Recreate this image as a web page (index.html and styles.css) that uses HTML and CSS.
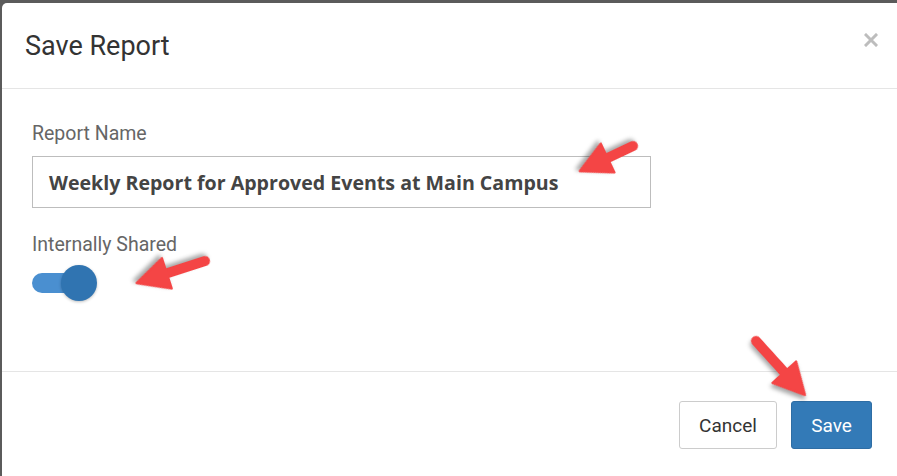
FILE: index.html
```html
<!DOCTYPE html>
<html>
<head>
<meta charset="utf-8">
<link rel="stylesheet" href="styles.css">
</head>
<body>
<div class="modal">
  <div class="modal-header">
    <h2 class="title">Save Report</h2>
    <svg class="close" width="14" height="14" viewBox="0 0 14 14"><path d="M2 2 L12 12 M12 2 L2 12" stroke="#bdbdbd" stroke-width="3" stroke-linecap="square"/></svg>
  </div>
  <div class="modal-body">
    <label class="label">Report Name</label>
    <div class="input">Weekly Report for Approved Events at Main Campus</div>
    <label class="label label-2">Internally Shared</label>
    <div class="toggle"><span class="track"></span><span class="knob"></span></div>
  </div>
  <div class="modal-footer">
    <button class="btn btn-cancel">Cancel</button>
    <button class="btn btn-save">Save</button>
  </div>
</div>
<svg class="arrows" width="897" height="476" viewBox="0 0 897 476">
  <g class="arrow" transform="translate(633 146) rotate(154.7)">
    <line x1="0" y1="0" x2="34" y2="0"/>
    <polygon points="59,0 28,-16 28,16"/>
  </g>
  <g class="arrow" transform="translate(205 261) rotate(162.1)">
    <line x1="0" y1="0" x2="46" y2="0"/>
    <polygon points="72,0 40,-16 40,16"/>
  </g>
  <g class="arrow" transform="translate(756 341) rotate(47.8)">
    <line x1="0" y1="0" x2="48" y2="0"/>
    <polygon points="73,0 42,-16 42,16"/>
  </g>
</svg>
</body>
</html>
```
FILE: styles.css
```css
html, body {
  margin: 0;
  padding: 0;
  height: 100%;
  overflow: hidden;
}
body {
  background: #5b5b5b;
  font-family: Roboto, "Liberation Sans", sans-serif;
  position: relative;
}
.modal {
  margin: 3px 0 0 2px;
  background: #fff;
  border-radius: 5px 0 0 0;
  min-height: 520px;
}
.modal-header {
  height: 85px;
  border-bottom: 1px solid #e5e5e5;
  display: flex;
  align-items: center;
  justify-content: space-between;
  padding: 0 19px 0 23px;
}
.title {
  margin: 0;
  font-weight: 400;
  font-size: 27px;
  color: #333;
}
.close {
  margin-top: -12px;
}
.modal-body {
  height: 249px;
  padding: 33px 0 0 30px;
  display: flex;
  flex-direction: column;
  align-items: flex-start;
}
.label {
  font-size: 19.5px;
  line-height: 23px;
  color: #666;
}
.input {
  margin-top: 11px;
  width: 584px;
  height: 50px;
  border: 1px solid #bdbdbd;
  padding: 0 17px 0 16px;
  display: flex;
  align-items: center;
  font-family: "Open Sans", sans-serif;
  font-weight: 700;
  font-size: 19.6px;
  color: #444;
}
.label-2 {
  margin-top: 25px;
}
.toggle {
  margin-top: 8.5px;
  width: 66px;
  height: 36px;
  position: relative;
  display: flex;
  align-items: center;
}
.track {
  width: 44px;
  height: 20px;
  border-radius: 10px;
  background: #4a8fd0;
}
.knob {
  position: absolute;
  left: 29px;
  top: 0;
  width: 36px;
  height: 36px;
  border-radius: 50%;
  background: #3074b1;
  box-shadow: 0 1px 3px rgba(0,0,0,0.25);
}
.modal-footer {
  border-top: 1px solid #e5e5e5;
  padding: 29px 25px 0 0;
  display: flex;
  justify-content: flex-end;
  gap: 14px;
}
.btn {
  height: 48px;
  border-radius: 3px;
  font-family: Roboto, "Liberation Sans", sans-serif;
  font-size: 19px;
  padding: 0;
}
.btn-cancel {
  width: 98px;
  background: #fff;
  border: 1px solid #ccc;
  color: #333;
}
.btn-save {
  width: 81px;
  background: #337ab7;
  border: 1px solid #2e6da4;
  color: #fff;
}
.arrows {
  position: absolute;
  left: 0;
  top: 0;
  pointer-events: none;
}
.arrow {
  filter: drop-shadow(2px 3px 2px rgba(0,0,0,0.35));
}
.arrow line {
  stroke: #f44545;
  stroke-width: 10;
  stroke-linecap: round;
}
.arrow polygon {
  fill: #f44545;
  stroke: #f44545;
  stroke-width: 2;
  stroke-linejoin: round;
}
```
